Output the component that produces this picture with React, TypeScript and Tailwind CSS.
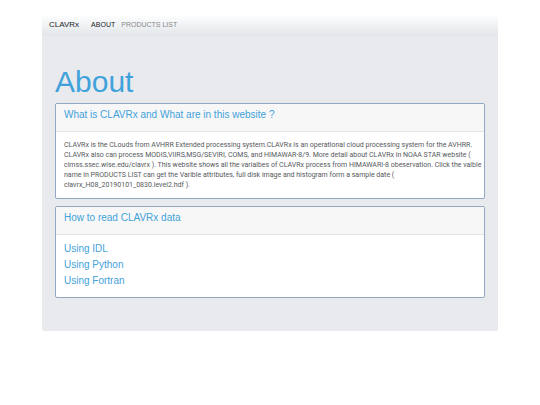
import type { ReactNode } from 'react';

const NAV_LINKS = [
  { label: 'ABOUT', active: true },
  { label: 'PRODUCTS LIST', active: false },
];

const GUIDES = ['Using IDL', 'Using Python', 'Using Fortran'];

const DESCRIPTION = [
  'CLAVRx is the CLouds from AVHRR Extended processing system.CLAVRx is an operational cloud processing system for the AVHRR.',
  'CLAVRx also can process MODIS,VIIRS,MSG/SEVIRI, COMS, and HIMAWAR-8/9. More detail about CLAVRx in NOAA STAR website (',
  'cimss.ssec.wise.edu/clavrx ). This website shows all the varialbes of CLAVRx process from HIMAWARI-8 obeservation. Click the vaible',
  'name in PRODUCTS LIST can get the Varible attributes, full disk image and histogram form a sample date (',
  'clavrx_H08_20190101_0830.level2.hdf ).',
];

interface CardProps {
  title: string;
  children: ReactNode;
}

function Card({ title, children }: CardProps) {
  return (
    <section className="rounded-xs border border-[#91a8c2] bg-white">
      <h2 className="h-7 border-b border-[#e4e5e6] bg-[#f7f7f7] px-2 pt-1 text-[10px] leading-[14px] text-[#3fa2db]">
        {title}
      </h2>
      <div className="px-2 pt-[6px] pb-2">{children}</div>
    </section>
  );
}

export default function App() {
  return (
    <div className="px-[42px] pt-[14px] font-['Liberation_Sans',Arial,sans-serif]">
      {/* Navbar */}
      <nav className="flex h-[22px] items-center bg-linear-to-b from-white to-[#e2e6e9] px-[7px]">
        <a href="#" className="mr-3 text-[8px] text-[#222629]">CLAVRx</a>
        <div className="flex gap-[6px]">
          {NAV_LINKS.map(l => (
            <a
              key={l.label}
              href="#"
              className={`text-[7px] ${l.active ? 'text-[#222629]' : 'text-[#85888b]'}`}
            >
              {l.label}
            </a>
          ))}
        </div>
      </nav>

      {/* Page body */}
      <main className="rounded-b-xs bg-[#e8eaee] px-[13px] pt-7 pb-[33px]">
        <h1 className="mb-1 text-[30px] leading-[35px] text-[#3fa2db]">About</h1>
        <div className="flex flex-col gap-[7px]">
          <Card title="What is CLAVRx and What are in this website ?">
            <p className="pt-[2px] font-[Roboto,'Liberation_Sans',sans-serif] text-[7px] leading-[10px] text-[#55595c]">
              {DESCRIPTION.map(line => (
                <span key={line} className="block whitespace-nowrap">{line}</span>
              ))}
            </p>
          </Card>
          <Card title="How to read CLAVRx data">
            <ul className="text-[10px] leading-4 text-[#3fa2db]">
              {GUIDES.map(g => (
                <li key={g}>
                  <a href="#" className="block">{g}</a>
                </li>
              ))}
            </ul>
          </Card>
        </div>
      </main>
    </div>
  );
}
